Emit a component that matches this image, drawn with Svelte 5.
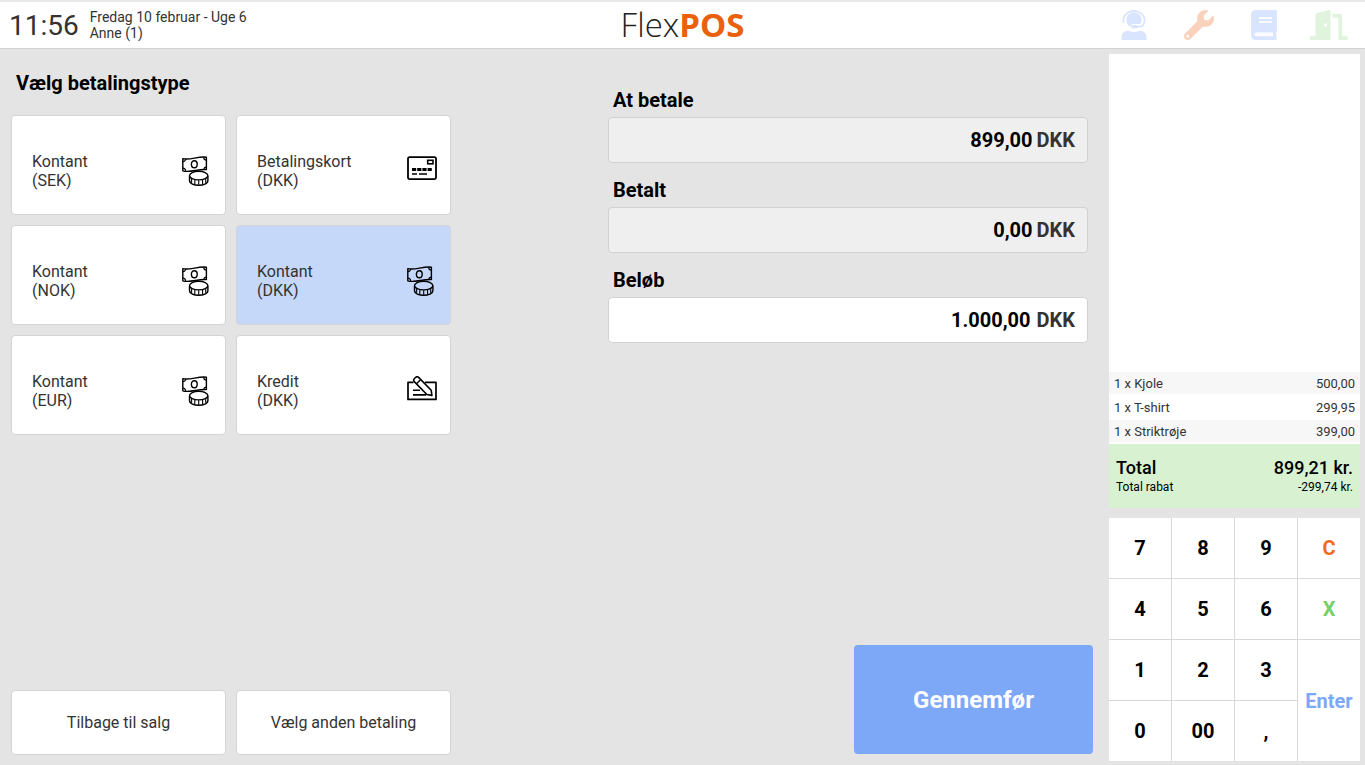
<script lang="ts">
  type Payment = { name: string; currency: string; icon: 'cash' | 'card' | 'credit' };

  const payments: Payment[] = [
    { name: 'Kontant', currency: 'SEK', icon: 'cash' },
    { name: 'Betalingskort', currency: 'DKK', icon: 'card' },
    { name: 'Kontant', currency: 'NOK', icon: 'cash' },
    { name: 'Kontant', currency: 'DKK', icon: 'cash' },
    { name: 'Kontant', currency: 'EUR', icon: 'cash' },
    { name: 'Kredit', currency: 'DKK', icon: 'credit' },
  ];

  const lines = [
    { text: '1 x Kjole', price: '500,00' },
    { text: '1 x T-shirt', price: '299,95' },
    { text: '1 x Striktrøje', price: '399,00' },
  ];

  const keys = ['7', '8', '9', 'C', '4', '5', '6', 'X', '1', '2', '3', 'Enter', '0', '00', ','];

  let selected = $state(3);
  let amount = $state('1.000,00');

  function press(key: string) {
    if (key === 'C') amount = '';
    else if (key === 'X') amount = amount.slice(0, -1);
    else if (key !== 'Enter') amount += key;
  }
</script>

<div class="pos">
  <header>
    <div class="status">
      <time class="clock">11:56</time>
      <div class="info">
        <div>Fredag 10 februar - Uge 6</div>
        <div>Anne (1)</div>
      </div>
    </div>
    <div class="logo"><span class="flex">Flex</span><span class="brand">POS</span></div>
    <nav>
      <button class="support" aria-label="Support">
        <svg width="26" height="30" viewBox="0 0 26 30">
          <circle cx="13" cy="10" r="7.7" fill="currentColor" />
          <path d="M2.300 13V10.500a10.700 9.700 0 0 1 21.400 0" fill="none" stroke="currentColor" stroke-width="1.700" />
          <path d="M9.500 15.800q2-2.600 5-1.800h4.500l2-2v5h-11z" fill="#fff" />
          <path d="M23.400 10.500c0 4.500-2 6.200-5.200 6.200h-5" fill="none" stroke="currentColor" stroke-width="1.700" />
          <rect x="10.200" y="15" width="6.500" height="3.500" rx="1.700" fill="currentColor" />
          <path d="M.5 30v-3c0-4 3-6.300 7-6.300 3.500 1.600 7.500 1.600 11 0 4 0 7 2.300 7 6.300v3z" fill="currentColor" />
        </svg>
      </button>
      <button class="tools" aria-label="Værktøj">
        <svg width="30" height="30" viewBox="0 0 512 512">
          <path fill="currentColor" d="M507.700 109.100c-2.200-9-13.500-12.100-20.100-5.500l-74.400 74.400-67.900-11.300L334 98.900l74.400-74.400c6.600-6.600 3.400-17.900-5.700-20.200-47.400-11.700-99.600.9-136.600 37.900-39.600 39.600-50.600 97.100-34.100 147.200L18.700 402.800c-25 25-25 65.500 0 90.500s65.500 25 90.500 0l213.200-213.200c50.100 16.700 107.500 5.700 147.400-34.200 37.100-37.100 49.700-89.300 37.900-136.800zM64 472c-13.200 0-24-10.800-24-24 0-13.300 10.700-24 24-24s24 10.700 24 24c0 13.200-10.700 24-24 24z" />
        </svg>
      </button>
      <button class="journal" aria-label="Journal">
        <svg width="26" height="30" viewBox="0 0 26 30">
          <path fill="currentColor" d="M5 0h19.500Q26 0 26 1.500V21q0 1-.8 1.500v5.500q.8.500.8 1.200 0 .8-1 .8H5q-5 0-5-5V5q0-5 5-5z" />
          <path d="M8 8.200h13M8 12h13" stroke="#fff" stroke-width="1.700" />
          <path d="M22 22.500H5.500a1.800 1.800 0 0 0 0 3.700H22z" fill="#fff" />
        </svg>
      </button>
      <button class="exit" aria-label="Log ud">
        <svg width="38" height="30" viewBox="0 0 38 30">
          <path fill="currentColor" d="M0 26.300h5.500V5q0-1.300 1.300-1.700L18.800.1q1.700-.3 1.700 1.400V30H0z" />
          <circle cx="15.500" cy="15" r="1.700" fill="#fff" />
          <path fill="currentColor" d="M22.500 4h8q1.700 0 1.700 1.700v20.600H37.500V30h-9V7.700h-6z" />
        </svg>
      </button>
    </nav>
  </header>

  <main>
    <section class="types">
      <h1>Vælg betalingstype</h1>
      <div class="tiles">
        {#each payments as payment, i}
          <button class="tile" class:selected={selected === i} onclick={() => (selected = i)}>
            <span>{payment.name}<br />({payment.currency})</span>
            <svg width="30" height="30" viewBox="0 0 30 30" fill="none" stroke="#000" stroke-width="1.4" aria-hidden="true">
              {#if payment.icon === 'cash'}
                <path d="M.8 2.600C8 4.500 16 0 24.400 1.200V13.600C16 12.800 8 17 .8 14.800z" stroke-linejoin="round" />
                <ellipse cx="12.300" cy="8.200" rx="2.900" ry="3.500" />
                <path d="M.8 5.600q2.600 0 2.900-2.600M.8 12q2.600.3 2.900 2.900M24.400 4.200q-2.400-.2-2.800-2.900M24.400 10.800q-2.400.3-2.800 2.700" stroke-width="1.200" />
                <path d="M7.500 20v4.500c0 6.300 18.400 6.300 18.400 0V20" class="coin" />
                <ellipse cx="16.700" cy="19.600" rx="9.200" ry="4.300" class="coin" />
                <path d="M9.600 22.500v4.200M12.800 24v4.400M16.700 24.200v4.600M20.600 24v4.400M23.700 22.500v4.200" stroke-width="1.100" />
              {:else if payment.icon === 'card'}
                <rect x="1" y="1.100" width="28" height="22" rx="1.500" stroke-width="1.800" />
                <rect x="20.700" y="4.300" width="5.300" height="3.500" stroke-width="1.600" />
                <path d="M5 13.600h20" stroke-width="3" stroke-dasharray="4.200 1" />
                <path d="M5 18h5M12 18h8" />
              {:else}
                <path d="M6.500 6.400H1V23.400H29V6.400H18" stroke-width="1.700" stroke-linejoin="round" />
                <path d="M6 14.200h7M6 18.900h13" stroke-width="1.600" />
                <path d="M7.300 5.600Q6 4.200 7.300 2.700L8.700 1.300Q10.200.2 11.600 1.400L24.200 14.200 24.900 19.400 19.800 18.500z" stroke-linejoin="round" stroke-width="1.600" />
                <path d="M9.500 7.800l4.300-4.200" />
              {/if}
            </svg>
          </button>
        {/each}
      </div>
      <div class="actions">
        <button>Tilbage til salg</button>
        <button>Vælg anden betaling</button>
      </div>
    </section>

    <section class="payment">
      <div class="fields">
        <label for="due">At betale</label>
        <div class="field readonly">
          <input id="due" value="899,00" readonly />
          <span>DKK</span>
        </div>
        <label for="paid">Betalt</label>
        <div class="field readonly">
          <input id="paid" value="0,00" readonly />
          <span>DKK</span>
        </div>
        <label for="amount">Beløb</label>
        <div class="field">
          <input id="amount" bind:value={amount} />
          <span>DKK</span>
        </div>
      </div>
      <button class="complete">Gennemfør</button>
    </section>

    <aside>
      <div class="receipt">
        <table>
          <tbody>
            {#each lines as line}
              <tr>
                <td>{line.text}</td>
                <td class="price">{line.price}</td>
              </tr>
            {/each}
          </tbody>
        </table>
        <div class="total">
          <div class="sum"><span>Total</span><span>899,21 kr.</span></div>
          <div class="discount"><span>Total rabat</span><span>-299,74 kr.</span></div>
        </div>
      </div>
      <div class="keypad">
        {#each keys as key}
          <button
            class:clear={key === 'C'}
            class:delete={key === 'X'}
            class:enter={key === 'Enter'}
            onclick={() => press(key)}>{key}</button>
        {/each}
      </div>
    </aside>
  </main>
</div>

<style>
  :global(body) {
    background: #e4e4e4;
  }

  .pos {
    display: flex;
    flex-direction: column;
    min-height: 100vh;
    box-sizing: border-box;
    border-top: 2px solid #e8e8e8;
    font-family: Roboto, 'Liberation Sans', sans-serif;
    font-size: 16px;
    color: #333;
  }

  button,
  input {
    font: inherit;
    color: inherit;
    box-sizing: border-box;
    margin: 0;
    padding: 0;
    border: 0;
  }

  button {
    background: #fff;
    cursor: pointer;
  }

  header {
    display: grid;
    grid-template-columns: 1fr auto 1fr;
    align-items: center;
    height: 46px;
    background: #fff;
    border-bottom: 1px solid #d0d3d0;
  }

  .status {
    display: flex;
    align-items: center;
    gap: 11px;
    padding-left: 9px;
  }

  .clock {
    font-size: 28px;
  }

  .info {
    font-size: 14px;
    line-height: 16px;
  }

  .logo {
    display: flex;
    font-family: 'Open Sans', sans-serif;
    font-size: 33px;
    line-height: 46px;
    color: #222;
  }

  .flex {
    font-weight: 300;
  }

  .brand {
    font-weight: 700;
    color: #e9610c;
  }

  nav {
    display: flex;
    justify-content: flex-end;
    padding-right: 4px;
  }

  nav button {
    display: flex;
    justify-content: center;
    width: 65px;
  }

  .support,
  .journal {
    color: #d9e5fe;
  }

  .tools {
    color: #fad2bb;
  }

  .exit {
    color: #e0f4dd;
  }

  main {
    flex: 1;
    display: grid;
    grid-template-columns: 440px 1fr 251px;
    column-gap: 16px;
    padding: 5px 5px 4px 11px;
  }

  .types {
    display: flex;
    flex-direction: column;
    padding-bottom: 6px;
  }

  h1 {
    margin: 17px 5px 20px;
    font-size: 20px;
    line-height: 24px;
    font-weight: 700;
    color: #000;
  }

  .tiles,
  .actions {
    display: grid;
    grid-template-columns: 1fr 1fr;
    gap: 10px;
  }

  .tile,
  .actions button {
    border: 1px solid #d4d4d4;
    border-radius: 4px;
  }

  .tile {
    display: flex;
    align-items: center;
    justify-content: space-between;
    height: 100px;
    padding: 12px 13px 0 20px;
    text-align: left;
    line-height: 19px;
  }

  .tile.selected {
    background: #c5d8fa;
  }

  .coin {
    fill: #fff;
  }

  .tile.selected .coin {
    fill: #c5d8fa;
  }

  .actions {
    margin-top: auto;
  }

  .actions button {
    height: 65px;
  }

  .payment {
    display: flex;
    flex-direction: column;
    justify-content: space-between;
    align-items: flex-end;
    padding-bottom: 7px;
  }

  .fields {
    width: 480px;
    margin: 34px 5px 0 0;
  }

  label {
    display: block;
    padding: 0 5px 5px;
    font-size: 20px;
    line-height: 24px;
    font-weight: 700;
    color: #000;
  }

  .field {
    display: flex;
    align-items: center;
    box-sizing: border-box;
    height: 46px;
    margin-bottom: 15px;
    padding-right: 12px;
    background: #fff;
    border: 1px solid #d2d2d2;
    border-radius: 4px;
    font-size: 20px;
    font-weight: 700;
  }

  .field input {
    flex: 1;
    min-width: 0;
    height: 100%;
    padding-right: 6px;
    background: transparent;
    text-align: right;
    color: #000;
    outline: none;
  }

  .field.readonly {
    background: #efefef;
  }

  .field.readonly input {
    padding-right: 4px;
  }

  .complete {
    width: 239px;
    height: 109px;
    background: #7da8f8;
    border-radius: 4px;
    color: #fff;
    font-size: 24px;
    font-weight: 700;
  }

  aside {
    display: flex;
    flex-direction: column;
    gap: 10px;
  }

  .receipt {
    flex: 1;
    display: flex;
    flex-direction: column;
    justify-content: flex-end;
    background: #fff;
  }

  table {
    width: 100%;
    border-collapse: collapse;
    font-size: 13px;
  }

  tr:nth-child(odd) {
    background: #f7f7f7;
  }

  td {
    height: 22px;
    padding: 0 5px;
    border-bottom: 2px solid #fff;
  }

  .price {
    text-align: right;
  }

  .total {
    box-sizing: border-box;
    height: 64px;
    padding: 13px 7px;
    background: #d7f1d1;
    color: #000;
  }

  .sum,
  .discount {
    display: flex;
    justify-content: space-between;
  }

  .sum {
    font-size: 18px;
    line-height: 22px;
    font-weight: 500;
  }

  .discount {
    font-size: 12px;
    line-height: 16px;
  }

  .keypad {
    display: grid;
    grid-template-columns: repeat(4, 1fr);
    grid-auto-rows: 60px;
    gap: 1px;
    background: #d8d8d8;
  }

  .keypad button {
    font-size: 20px;
    font-weight: 700;
    color: #000;
  }

  .keypad .clear {
    color: #f26a21;
  }

  .keypad .delete {
    color: #76d266;
  }

  .keypad .enter {
    grid-row: span 2;
    color: #7da8f8;
  }
</style>
